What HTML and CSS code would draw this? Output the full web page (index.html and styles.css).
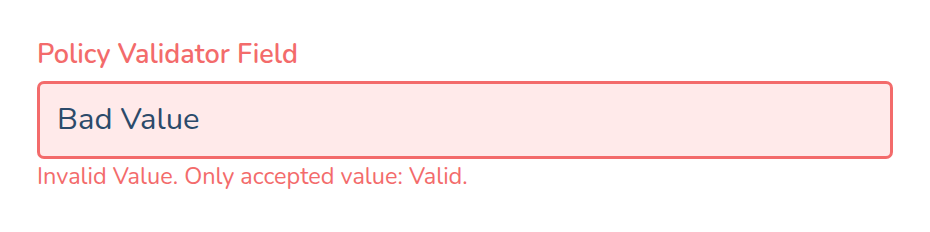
FILE: index.html
```html
<!DOCTYPE html>
<html lang="en">
<head>
    <meta charset="UTF-8">
    <meta name="viewport" content="width=device-width, initial-scale=1.0">
    <title>Policy Validator Field</title>
    <link rel="stylesheet" href="styles.css">
</head>
<body>
    <div class="container">
        <div class="form-group has-error">
            <label for="policyField">Policy Validator Field</label>
            <input type="text" id="policyField" value="Bad Value">
            <div class="error">Invalid Value. Only accepted value: Valid.</div>
        </div>
    </div>
</body>
</html>
```

FILE: styles.css
```css
body {
    font-family: 'Nunito', 'Lato', 'Noto Sans', Arial, sans-serif;
    margin: 0;
    background-color: #fff;
}
.container {
    padding: 38px 37px;
    max-width: 856px;
}
.form-group {
    display: flex;
    flex-direction: column;
}
label {
    display: block;
    font-size: 27px;
    font-weight: 600;
    line-height: 34px;
    margin-bottom: 9px;
    color: #f36b6b;
}
input[type="text"] {
    width: 100%;
    height: 78px;
    padding: 0 17px 3px;
    border: 3px solid #f36b6b;
    border-radius: 7px;
    box-sizing: border-box;
    background-color: #ffeaea;
    color: #2c4a6a;
    font-family: inherit;
    font-size: 31px;
    outline: none;
}
.error {
    font-size: 23.5px;
    line-height: 28px;
    margin-top: 3px;
    color: #f36b6b;
}
```
